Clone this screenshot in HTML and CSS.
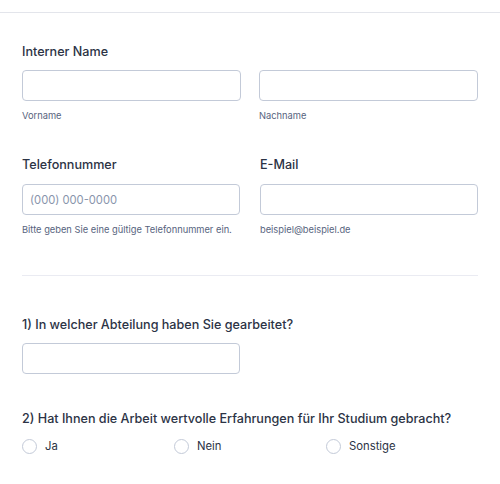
FILE: index.html
```html
<!DOCTYPE html>
<html lang="de">
<head>
<meta charset="utf-8">
<title>Formular</title>
<link rel="stylesheet" href="styles.css">
</head>
<body>
<div class="topbar"></div>
<form class="form">
  <div class="field">
    <div class="label">Interner Name</div>
    <div class="row row-name">
      <div class="col">
        <div class="input"></div>
        <div class="sub">Vorname</div>
      </div>
      <div class="col">
        <div class="input"></div>
        <div class="sub">Nachname</div>
      </div>
    </div>
  </div>
  <div class="row row-contact">
    <div class="col">
      <div class="label">Telefonnummer</div>
      <div class="input"><span class="ph">(000) 000-0000</span></div>
      <div class="sub">Bitte geben Sie eine gültige Telefonnummer ein.</div>
    </div>
    <div class="col">
      <div class="label">E-Mail</div>
      <div class="input"></div>
      <div class="sub">beispiel@beispiel.de</div>
    </div>
  </div>
  <div class="divider"></div>
  <div class="field q1">
    <div class="label">1) In welcher Abteilung haben Sie gearbeitet?</div>
    <div class="row row-contact">
      <div class="col"><div class="input"></div></div>
    </div>
  </div>
  <div class="field q2">
    <div class="label">2) Hat Ihnen die Arbeit wertvolle Erfahrungen für Ihr Studium gebracht?</div>
    <div class="radios">
      <label class="radio"><span class="circle"></span><span>Ja</span></label>
      <label class="radio"><span class="circle"></span><span>Nein</span></label>
      <label class="radio"><span class="circle"></span><span>Sonstige</span></label>
    </div>
  </div>
</form>
</body>
</html>
```
FILE: styles.css
```css
* { box-sizing: border-box; }
html, body { margin: 0; padding: 0; background: #fff; }
body {
  font-family: Inter, "Noto Sans", "Liberation Sans", sans-serif;
  color: #2c3345;
  width: 500px;
  height: 484px;
  overflow: hidden;
}
.topbar {
  height: 13px;
  border-bottom: 1px solid #e3e5eb;
}
.form {
  padding: 0 22px;
}
.label {
  font-size: 12.6px;
  line-height: 20px;
  font-weight: 500;
  color: #2c3345;
}
.field:first-child { padding-top: 29px; }
.field:first-child > .label { margin-bottom: 8px; }
.row {
  display: grid;
  grid-template-columns: 1fr 1fr;
}
.row-name { column-gap: 18px; }
.row-contact { column-gap: 20px; }
.form > .row-contact { padding-top: 32px; }
.form > .row-contact .label { margin-bottom: 9px; }
.input {
  height: 31px;
  border: 1px solid #c3cad8;
  border-radius: 4px;
  background: #fff;
  display: flex;
  align-items: center;
  padding: 0 7px;
}
.ph {
  font-size: 11.2px;
  color: #8894ab;
}
.sub {
  margin-top: 8px;
  font-size: 9.3px;
  line-height: 14px;
  color: #57647e;
}
.divider {
  margin-top: 38px;
  height: 1px;
  background: #eaebf2;
}
.q1 { padding-top: 39px; }
.q1 > .label { margin-bottom: 8px; }
.q2 { padding-top: 35px; }
.q2 > .label { margin-bottom: 7px; }
.radios {
  display: grid;
  grid-template-columns: repeat(3, 1fr);
}
.radio {
  display: flex;
  align-items: center;
  gap: 8px;
  font-size: 11.3px;
  line-height: 20px;
  color: #2c3345;
}
.circle {
  width: 15px;
  height: 15px;
  border: 1px solid #c3cad8;
  border-radius: 50%;
  background: #fff;
  flex: none;
}
```
